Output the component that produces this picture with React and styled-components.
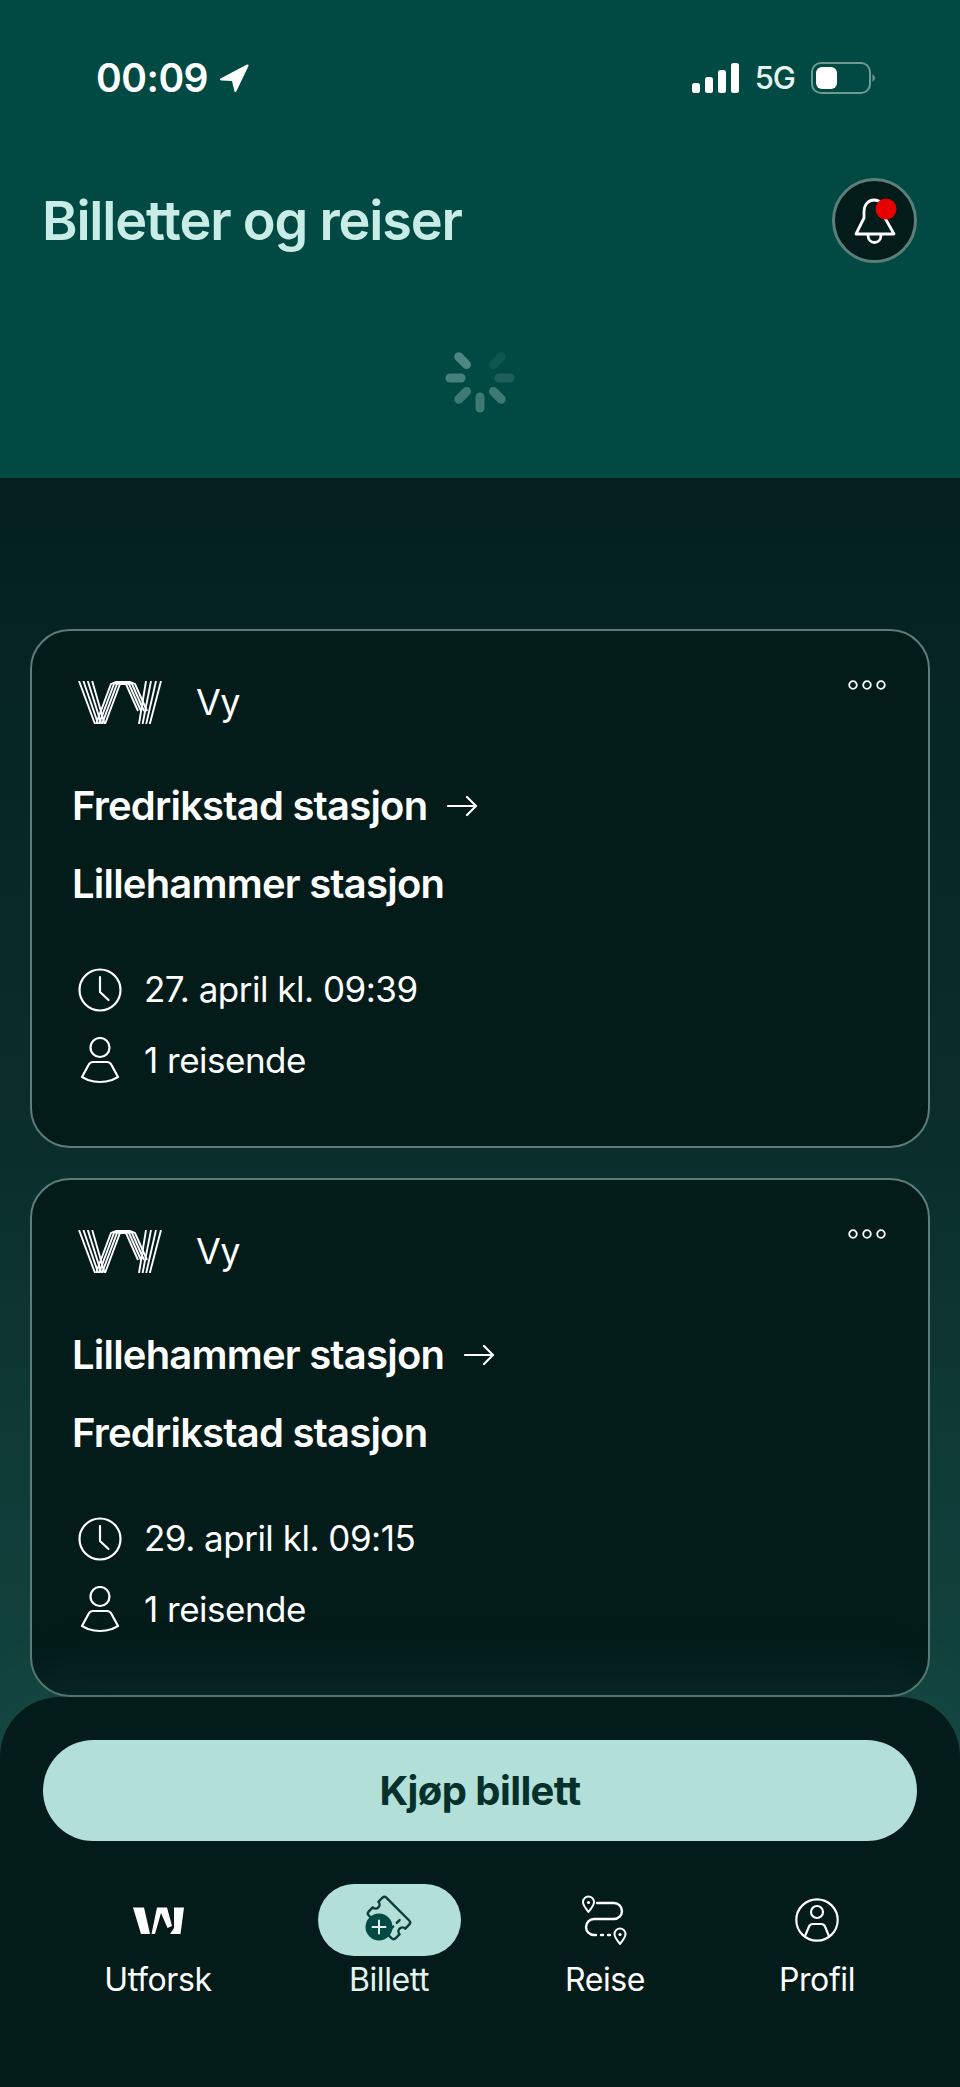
import React from 'react'
import styled, { createGlobalStyle } from 'styled-components'

const GlobalStyle = createGlobalStyle`
html, body {
  margin: 0;
  padding: 0;
  background: #03201f;
}
* { box-sizing: border-box; }
`

const Screen = styled.div`
width: 960px;
height: 2087px;
display: flex;
flex-direction: column;
overflow: hidden;
font-family: Inter, "Liberation Sans", sans-serif;
color: #fff;
background: linear-gradient(180deg, #03201f 478px, #0a2e2b 1150px, #134540 1720px);
`

const Header = styled.header`
height: 478px;
flex: none;
padding-top: 58px;
background: #004a43;
`

const StatusBar = styled.div`
height: 40px;
padding: 0 85px 0 96px;
display: flex;
align-items: center;
justify-content: space-between;
`

const StatusGroup = styled.div`
display: flex;
align-items: center;
gap: ${props => props.$gap || 10}px;
`

const Time = styled.span`
font-size: 39px;
line-height: 40px;
font-weight: 600;
letter-spacing: -0.5px;
`

const Network = styled.span`
font-size: 31px;
line-height: 40px;
font-weight: 500;
letter-spacing: -1px;
color: #e6f4f1;
`

const TitleRow = styled.div`
margin-top: 80px;
padding: 0 43px 0 42px;
display: flex;
align-items: center;
justify-content: space-between;
`

const Title = styled.h1`
margin: 0;
font-size: 54px;
line-height: 66px;
font-weight: 600;
letter-spacing: -1.2px;
color: #c9ece6;
`

const BellButton = styled.div`
width: 85px;
height: 85px;
border-radius: 50%;
background: #031b19;
border: 3px solid #5d7d78;
display: flex;
align-items: center;
justify-content: center;
`

const SpinnerWrap = styled.div`
margin-top: 77px;
display: flex;
justify-content: center;
`

const Content = styled.main`
flex: none;
height: 1219px;
padding: 151px 30px 0;
display: flex;
flex-direction: column;
gap: 30px;
`

const Card = styled.article`
height: 519px;
flex: none;
padding: 49px 42px 0 40px;
border: 2px solid #5d7d78;
border-radius: 40px;
background: #031b19;
`

const CardTop = styled.div`
height: 44px;
display: flex;
align-items: flex-start;
justify-content: space-between;
`

const Operator = styled.div`
display: flex;
align-items: center;
gap: 34px;
padding-left: 6px;
`

const OperatorName = styled.span`
font-size: 36px;
line-height: 44px;
letter-spacing: -0.5px;
`

const Route = styled.div`
margin-top: 43px;
`

const RouteLine = styled.div`
height: 78px;
display: flex;
align-items: center;
gap: 20px;
font-size: 40px;
line-height: 78px;
font-weight: 600;
letter-spacing: -0.8px;
`

const Details = styled.div`
margin-top: 31px;
`

const DetailRow = styled.div`
height: 71px;
display: flex;
align-items: center;
gap: 22px;
padding-left: 6px;
font-size: 35px;
line-height: 71px;
letter-spacing: -0.5px;
`

const DetailIcon = styled.div`
width: 44px;
height: 48px;
display: flex;
align-items: center;
justify-content: center;
`

const Panel = styled.section`
flex: 1;
padding: 43px 43px 0;
border-radius: 60px 60px 0 0;
background: #031b19;
box-shadow: 0 -26px 50px rgba(28, 80, 74, 0.22);
`

const BuyButton = styled.div`
height: 101px;
border-radius: 51px;
background: #b2dfd7;
color: #06302c;
display: flex;
align-items: center;
justify-content: center;
font-size: 40px;
font-weight: 700;
letter-spacing: -0.6px;
`

const Nav = styled.nav`
margin: 43px 0 0 5px;
display: grid;
grid-template-columns: 220px 242px 190px 234px;
`

const NavItem = styled.div`
display: flex;
flex-direction: column;
align-items: center;
gap: 4px;
`

const NavIcon = styled.div`
width: 143px;
height: 72px;
border-radius: 36px;
display: flex;
align-items: center;
justify-content: center;
background: ${props => props.$active ? '#b2dfd7' : 'transparent'};
`

const NavLabel = styled.span`
font-size: 32px;
line-height: 40px;
letter-spacing: -0.4px;
color: ${props => props.$active ? '#e3f4f0' : '#fff'};
`

const Icon = styled.svg`
display: block;
flex: none;
`

const Line = ({ d, w = 2.4, color = '#fff' }) => (
  <path d={d} fill="none" stroke={color} strokeWidth={w} strokeLinecap="round" strokeLinejoin="round" />
)

const LocationArrow = () => (
  <Icon width="30" height="30" viewBox="0 0 30 30">
    <path d="M28 1.5 L1.5 15.5 Q0 17 2.5 17.5 L13 18 L15.5 28.5 Q16.5 30 17.5 28 L29.5 3 Q30 1 28 1.5Z" fill="#fff" />
  </Icon>
)

const Signal = () => (
  <Icon width="47" height="30" viewBox="0 0 47 30">
    <rect x="0" y="20" width="8" height="10" rx="2.5" fill="#fff" />
    <rect x="13" y="14" width="8" height="16" rx="2.5" fill="#fff" />
    <rect x="26" y="7" width="8" height="23" rx="2.5" fill="#fff" />
    <rect x="39" y="0" width="8" height="30" rx="2.5" fill="#fff" />
  </Icon>
)

const Battery = () => (
  <Icon width="64" height="32" viewBox="0 0 64 32">
    <rect x="1" y="1" width="58" height="30" rx="9" fill="none" stroke="#6f9a94" strokeWidth="2" />
    <rect x="5" y="5" width="21" height="22" rx="6" fill="#fff" />
    <path d="M61.5 12 Q64 14 64 16 Q64 18 61.5 20Z" fill="#6f9a94" />
  </Icon>
)

const Bell = () => (
  <Icon width="44" height="48" viewBox="0 0 44 48">
    <Line d="M3 37 H41 L32 21 V15 C32 8 27 3 21 3 C15 3 11 8 11 15 V21 Z" w={2.8} />
    <Line d="M15 38 C15 48 28 48 28 38" w={2.8} />
    <circle cx="33" cy="12" r="10.5" fill="#e60000" />
  </Icon>
)

const spokes = [
  [0, 0], [45, 0.07], [90, 0.14], [135, 0.3], [180, 0.3], [225, 0.3], [270, 0.34], [315, 0.38],
]

const Spinner = () => (
  <Icon width="76" height="76" viewBox="-38 -38 76 76">
    {spokes.map(([angle, opacity]) => (
      <line
        key={angle}
        x1="0" y1="-19" x2="0" y2="-30"
        stroke="#c9ece6"
        strokeOpacity={opacity}
        strokeWidth="9"
        strokeLinecap="round"
        transform={`rotate(${angle})`}
      />
    ))}
  </Icon>
)

const VyStriped = () => (
  <Icon width="84" height="43" viewBox="0 0 84 43">
    {[0, 1, 2, 3].map(i => (
      <g key={i} fill="none" stroke="#fff" strokeWidth="1.9">
        <path d={`M${1 + i * 4.4} 0 L${17 + i * 3.2} 43`} />
        <path d={`M${18 + i * 3} 43 L${33 + i * 3} 3 Q${45} ${-3 + i * 2} ${57 - i * 3} 3 L${69 - i * 3} 30`} />
        <path d={`M${68 + i * 5} 0 L${61 + i * 3.6} 43`} />
      </g>
    ))}
  </Icon>
)

const VySolid = () => (
  <Icon width="51" height="27" viewBox="0 0 51 27">
    <path d="M0 0.5 H11 L17 27 H8 Z" fill="#fff" />
    <path d="M18.5 27 L24 0.5 H34 L39 19 L34.5 21 L28 6 L22 27 Z" fill="#fff" />
    <path d="M41 0.5 H51 L47.5 27 H37 L41 21 Z" fill="#fff" />
  </Icon>
)

const Dots = () => (
  <Icon width="38" height="10" viewBox="0 0 38 10">
    {[5, 19, 33].map(cx => (
      <circle key={cx} cx={cx} cy="5" r="3.8" fill="none" stroke="#fff" strokeWidth="1.8" />
    ))}
  </Icon>
)

const Arrow = () => (
  <Icon width="30" height="22" viewBox="0 0 30 22">
    <Line d="M1 11 H29 M20 2 L29 11 L20 20" w={2.2} />
  </Icon>
)

const Clock = () => (
  <Icon width="44" height="44" viewBox="0 0 44 44">
    <circle cx="22" cy="22" r="20.5" fill="none" stroke="#fff" strokeWidth="2.2" />
    <Line d="M22 9 V24 L30.5 32" w={2.2} />
  </Icon>
)

const Person = () => (
  <Icon width="38" height="47" viewBox="0 0 38 47">
    <circle cx="19" cy="10.5" r="9.5" fill="none" stroke="#fff" strokeWidth="2.2" />
    <Line d="M12 25 H26 Q29 25 30.5 28 L37 40 L31 43 Q19 47 7 43 L1 40 L7.5 28 Q9 25 12 25 Z" w={2.2} />
  </Icon>
)

const Ticket = () => (
  <Icon width="50" height="50" viewBox="0 0 50 50">
    <g transform="translate(25 23) rotate(45)">
      <Line
        d="M-16 -12.5 H16 Q19 -12.5 19 -9.5 V-4 A4 4 0 0 0 19 4 V9.5 Q19 12.5 16 12.5 H-16 Q-19 12.5 -19 9.5 V4 A4 4 0 0 0 -19 -4 V-9.5 Q-19 -12.5 -16 -12.5 Z"
        w={2.4}
        color="#0a3d39"
      />
      <Line d="M9 -6 V-2 M9 3 V7" w={2.4} color="#0a3d39" />
    </g>
    <circle cx="15" cy="32" r="13.5" fill="#004a43" />
    <Line d="M8.5 32 H21.5 M15 25.5 V38.5" w={2} color="#dff2ee" />
  </Icon>
)

const RouteIcon = () => (
  <Icon width="46" height="50" viewBox="0 0 46 50">
    <Line d="M6.5 17 C3 12 1 10.5 1 7 A5.5 5.5 0 0 1 12 7 C12 10.5 10 12 6.5 17 Z" w={2} />
    <circle cx="6.5" cy="7.5" r="1.6" fill="#fff" />
    <Line d="M15 8 H32 A8 8 0 0 1 32 24 H12 A8 8 0 0 0 12 40 H14" w={2.4} />
    <Line d="M19 40 H21 M26 40 H28" w={2.4} />
    <Line d="M38 49 C34.5 44 32.5 42.5 32.5 39 A5.5 5.5 0 0 1 43.5 39 C43.5 42.5 41.5 44 38 49 Z" w={2} />
    <circle cx="38" cy="39.5" r="1.6" fill="#fff" />
  </Icon>
)

const ProfileIcon = () => (
  <Icon width="44" height="44" viewBox="0 0 44 44">
    <circle cx="22" cy="22" r="20.7" fill="none" stroke="#fff" strokeWidth="2.2" />
    <circle cx="22" cy="14" r="6" fill="none" stroke="#fff" strokeWidth="2.2" />
    <Line d="M10.5 37 L14 28.5 Q15 26 18 26 H26 Q29 26 30 28.5 L33.5 37" w={2.2} />
  </Icon>
)

const tickets = [
  { id: 1, from: 'Fredrikstad stasjon', to: 'Lillehammer stasjon', when: '27. april kl. 09:39' },
  { id: 2, from: 'Lillehammer stasjon', to: 'Fredrikstad stasjon', when: '29. april kl. 09:15' },
]

const navItems = [
  { label: 'Utforsk', icon: <VySolid /> },
  { label: 'Billett', icon: <Ticket />, active: true },
  { label: 'Reise', icon: <RouteIcon /> },
  { label: 'Profil', icon: <ProfileIcon /> },
]

export default function App() {
  return (
    <Screen>
      <GlobalStyle />
      <Header>
        <StatusBar>
          <StatusGroup $gap={11}>
            <Time>00:09</Time>
            <LocationArrow />
          </StatusGroup>
          <StatusGroup $gap={16}>
            <Signal />
            <Network>5G</Network>
            <Battery />
          </StatusGroup>
        </StatusBar>
        <TitleRow>
          <Title>Billetter og reiser</Title>
          <BellButton><Bell /></BellButton>
        </TitleRow>
        <SpinnerWrap><Spinner /></SpinnerWrap>
      </Header>
      <Content>
        {tickets.map(ticket => (
          <Card key={ticket.id}>
            <CardTop>
              <Operator>
                <VyStriped />
                <OperatorName>Vy</OperatorName>
              </Operator>
              <Dots />
            </CardTop>
            <Route>
              <RouteLine>{ticket.from}<Arrow /></RouteLine>
              <RouteLine>{ticket.to}</RouteLine>
            </Route>
            <Details>
              <DetailRow><DetailIcon><Clock /></DetailIcon>{ticket.when}</DetailRow>
              <DetailRow><DetailIcon><Person /></DetailIcon>1 reisende</DetailRow>
            </Details>
          </Card>
        ))}
      </Content>
      <Panel>
        <BuyButton>Kjøp billett</BuyButton>
        <Nav>
          {navItems.map(item => (
            <NavItem key={item.label}>
              <NavIcon $active={item.active}>{item.icon}</NavIcon>
              <NavLabel $active={item.active}>{item.label}</NavLabel>
            </NavItem>
          ))}
        </Nav>
      </Panel>
    </Screen>
  )
}
